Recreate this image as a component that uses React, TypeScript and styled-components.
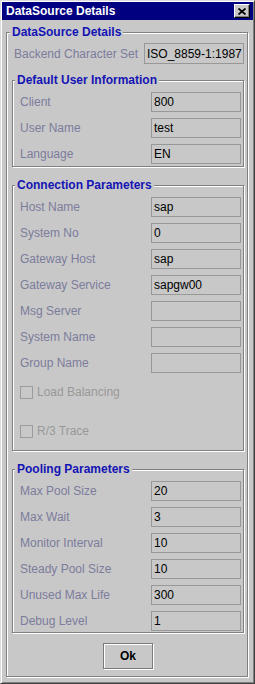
import styled, { createGlobalStyle } from "styled-components";

const GlobalStyle = createGlobalStyle`
  html, body {
    margin: 0;
    padding: 0;
    background: #c8c8c8;
  }
  body {
    font-family: "Liberation Sans", Arial, sans-serif;
    font-size: 12px;
  }
`;

type Field = { label: string; value: string };

const userInfo: Field[] = [
  { label: "Client", value: "800" },
  { label: "User Name", value: "test" },
  { label: "Language", value: "EN" },
];

const connection: Field[] = [
  { label: "Host Name", value: "sap" },
  { label: "System No", value: "0" },
  { label: "Gateway Host", value: "sap" },
  { label: "Gateway Service", value: "sapgw00" },
  { label: "Msg Server", value: "" },
  { label: "System Name", value: "" },
  { label: "Group Name", value: "" },
];

const pooling: Field[] = [
  { label: "Max Pool Size", value: "20" },
  { label: "Max Wait", value: "3" },
  { label: "Monitor Interval", value: "10" },
  { label: "Steady Pool Size", value: "10" },
  { label: "Unused Max Life", value: "300" },
  { label: "Debug Level", value: "1" },
];

const App = () => {
  return (
    <>
      <GlobalStyle />
      <Window>
        <TitleBar>
          <TitleText>DataSource Details</TitleText>
          <CloseButton>
            <svg width="8" height="7" viewBox="0 0 8 7">
              <path d="M0.5 0.5 L7.5 6.5 M7.5 0.5 L0.5 6.5" stroke="#000" strokeWidth="1.7" fill="none" />
            </svg>
          </CloseButton>
        </TitleBar>
        <OuterGroup>
          <GroupTitle>DataSource Details</GroupTitle>
          <BackendRow>
            <BackendLabel>Backend Character Set</BackendLabel>
            <BackendField>ISO_8859-1:1987</BackendField>
          </BackendRow>

          <InnerGroup $top={16} $pb={2}>
            <GroupTitle $inner>Default User Information</GroupTitle>
            {userInfo.map((f) => (
              <Row key={f.label}>
                <Label>{f.label}</Label>
                <Input>{f.value}</Input>
              </Row>
            ))}
          </InnerGroup>

          <InnerGroup $top={18} $pb={6}>
            <GroupTitle $inner>Connection Parameters</GroupTitle>
            {connection.map((f) => (
              <Row key={f.label}>
                <Label>{f.label}</Label>
                <Input>{f.value}</Input>
              </Row>
            ))}
            <CheckRow>
              <CheckBox />
              <CheckLabel>Load Balancing</CheckLabel>
            </CheckRow>
            <CheckRow $extra={7}>
              <CheckBox />
              <CheckLabel>R/3 Trace</CheckLabel>
            </CheckRow>
          </InnerGroup>

          <InnerGroup $top={18} $pb={1}>
            <GroupTitle $inner>Pooling Parameters</GroupTitle>
            {pooling.map((f) => (
              <Row key={f.label}>
                <Label>{f.label}</Label>
                <Input>{f.value}</Input>
              </Row>
            ))}
          </InnerGroup>

          <ButtonBar>
            <OkButton>Ok</OkButton>
          </ButtonBar>
        </OuterGroup>
      </Window>
    </>
  );
};

const Window = styled.div`
  box-sizing: border-box;
  width: 255px;
  height: 684px;
  padding: 1px;
  background: #c8c8c8;
  border: 1px solid;
  border-color: #dcdcdc #404040 #404040 #dcdcdc;
  box-shadow: inset 1px 1px #fff, inset -1px -1px #808080;
  display: flex;
  flex-direction: column;
`;

const TitleBar = styled.div`
  height: 18px;
  background: #000080;
  display: flex;
  align-items: center;
  justify-content: space-between;
  padding: 0 3px 0 4px;
`;

const TitleText = styled.span`
  color: #fff;
  font-weight: bold;
  font-size: 12px;
  line-height: 14px;
`;

const CloseButton = styled.div`
  box-sizing: border-box;
  width: 16px;
  height: 14px;
  background: #c8c8c8;
  border: 1px solid;
  border-color: #fff #000 #000 #fff;
  box-shadow: inset -1px -1px #808080;
  display: flex;
  align-items: center;
  justify-content: center;
`;

const OuterGroup = styled.div`
  position: relative;
  margin: 12px 5px 0 4px;
  padding: 10px 3px 7px 5px;
  border: 1px solid #808080;
  box-shadow: inset 1px 1px #fff, 1px 1px #fff;
  display: flex;
  flex-direction: column;
`;

const InnerGroup = styled.div<{ $top: number; $pb: number }>`
  position: relative;
  margin-top: ${(p) => p.$top}px;
  padding: 11px 2px ${(p) => p.$pb}px 7px;
  border: 1px solid #808080;
  box-shadow: inset 1px 1px #fff, 1px 1px #fff;
  display: flex;
  flex-direction: column;
  gap: 6px;
`;

const GroupTitle = styled.span<{ $inner?: boolean }>`
  position: absolute;
  top: -8px;
  left: ${(p) => (p.$inner ? 2 : 3)}px;
  padding: 0 2px;
  background: #c8c8c8;
  color: #1414b4;
  font-weight: bold;
  font-size: 12px;
  line-height: 14px;
  white-space: nowrap;
`;

const BackendRow = styled.div`
  display: flex;
  align-items: center;
  height: 21px;
`;

const BackendLabel = styled.span`
  margin-left: 2px;
  color: #7c7c9c;
  flex: 1;
  white-space: nowrap;
`;

const Row = styled.div`
  display: flex;
  align-items: center;
  height: 20px;
`;

const Label = styled.span`
  flex: 1;
  color: #7c7c9c;
  white-space: nowrap;
`;

const Input = styled.div`
  box-sizing: border-box;
  width: 90px;
  height: 20px;
  border: 1px solid #989898;
  padding-left: 2px;
  color: #000;
  display: flex;
  align-items: center;
  white-space: nowrap;
  overflow: hidden;
`;

const BackendField = styled(Input)`
  width: 100px;
  height: 21px;
`;

const CheckRow = styled.div<{ $extra?: number }>`
  display: flex;
  align-items: center;
  height: 26px;
  margin-top: ${(p) => p.$extra ?? 0}px;
`;

const CheckBox = styled.span`
  box-sizing: border-box;
  width: 13px;
  height: 13px;
  border: 1px solid #9c9c9c;
`;

const CheckLabel = styled.span`
  margin-left: 4px;
  color: #989898;
`;

const ButtonBar = styled.div`
  display: flex;
  justify-content: center;
  margin-top: 10px;
`;

const OkButton = styled.button`
  box-sizing: border-box;
  width: 50px;
  height: 26px;
  padding: 0;
  background: #c8c8c8;
  border: 1px solid #7a7a7a;
  box-shadow: inset 1px 1px #fff, 1px 1px #fff;
  font-family: "Liberation Sans", Arial, sans-serif;
  font-size: 12px;
  font-weight: bold;
  color: #000;
`;

export default App;
